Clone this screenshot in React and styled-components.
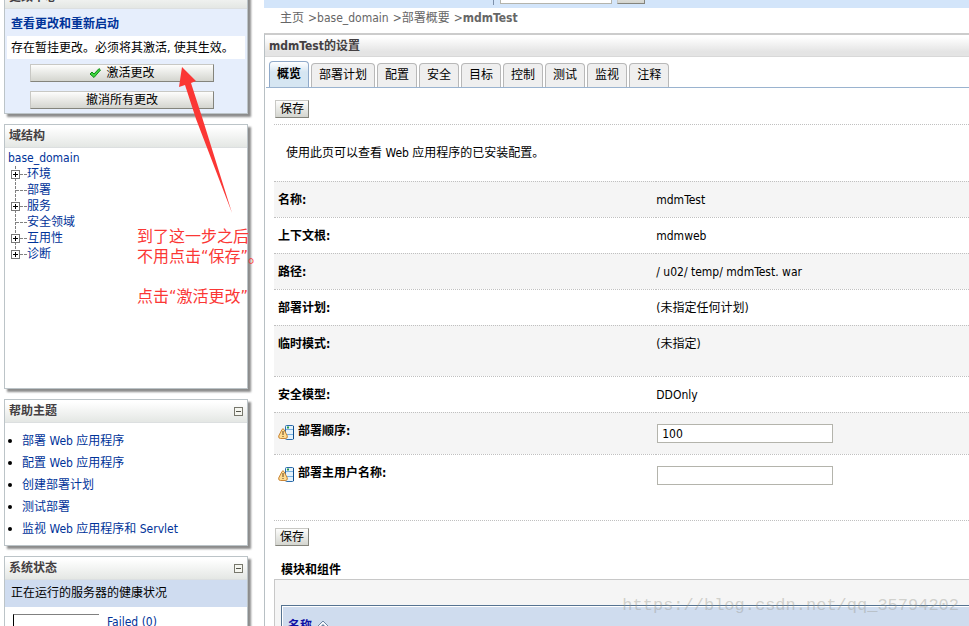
import styled, { createGlobalStyle, css } from "styled-components";

const GlobalStyle = createGlobalStyle`
  * {
    box-sizing: border-box;
  }
  html, body {
    margin: 0;
    height: 100%;
    overflow: hidden;
    background: #fff;
  }
  body, button, input {
    font-family: "DejaVu Sans Condensed", "Noto Sans CJK SC", sans-serif;
    font-size: 12px;
    line-height: 16px;
    color: #000;
  }
  a {
    color: #039;
    text-decoration: none;
  }
`;

// the console is scrolled down a little, so the first header is cut off
const Console = styled.div`
  display: flex;
  margin-top: -15px;
`;

/* ---------- left column ---------- */

const Sidebar = styled.aside`
  width: 264px;
  flex-shrink: 0;
  display: flex;
  flex-direction: column;
  gap: 10px;
  padding: 0 16px 0 4px;
`;

const Portlet = styled.section`
  border: 1px solid #bcc4c8;
  background: ${(p) => (p.$tinted ? "#e6eefc" : "#fff")};
  box-shadow: 3px 3px 2px #8c8c8c;
`;

const PortletHeader = styled.header`
  display: flex;
  justify-content: space-between;
  align-items: center;
  height: 23px;
  padding: 0 4px;
  border-bottom: 1px solid #dcdfe0;
  background: linear-gradient(#fff 10%, #e4e7e4);
`;

const PortletTitle = styled.h2`
  margin: 0;
  font-size: 12px;
  line-height: 16px;
  color: #443f42;
`;

const CollapseButton = styled.button`
  display: flex;
  width: 9px;
  height: 9px;
  padding: 0;
  border: 0;
  background: none;
`;

const ChangeBody = styled.div`
  padding: 7px 2px 4px;
`;

const ChangeLink = styled.a`
  display: block;
  padding-left: 4px;
  font-weight: bold;
`;

const ChangeNote = styled.p`
  margin: 4px 0 5px;
  padding: 4px 4px 3px;
  background: #fff;
  white-space: nowrap;
`;

const Button = styled.button`
  display: flex;
  align-items: center;
  justify-content: center;
  gap: 5px;
  height: 18px;
  padding: 0 4px;
  border: 1px solid;
  border-color: #c8c8c4 #84847c #84847c #c8c8c4;
  background: linear-gradient(#fdfdfc, #d4d5cf);
  white-space: nowrap;
`;

const WideButton = styled(Button)`
  width: 184px;
  margin-left: 23px;
  & + & {
    margin-top: 9px;
  }
`;

const TreeBody = styled.div`
  height: 240px;
  padding: 2px 3px;
`;

const Tree = styled.ul`
  margin: 0;
  padding: 0;
  list-style: none;
`;

const TreeItem = styled.li`
  display: flex;
  align-items: center;
  height: 16px;
  padding-left: 3px;
`;

const HelpList = styled.ul`
  margin: 0;
  padding: 7px 0 5px 17px;
  list-style: none;
  li {
    line-height: 22px;
    display: flex;
    align-items: center;
    white-space: nowrap;
  }
  li::before {
    content: "";
    width: 4px;
    height: 4px;
    margin: 0 10px 0 -14px;
    border-radius: 2px;
    background: #000;
  }
`;

const StatusTitle = styled.div`
  padding: 5px 6px 6px;
  background: #cfdcf0;
`;

const StatusRow = styled.div`
  display: flex;
  gap: 8px;
  padding: 7px 8px;
`;

const StatusBar = styled.div`
  width: 86px;
  height: 18px;
  border-top: 1px solid #808080;
  border-left: 1px solid #000;
`;

/* ---------- main column ---------- */

const Main = styled.main`
  flex: 1;
  min-width: 0;
`;

const TopBar = styled.form`
  display: flex;
  gap: 5px;
  height: 23px;
  padding-left: 229px;
  background: #d3e5fa;
`;

const SearchBox = styled.div`
  height: 20px;
  padding-left: 6px;
  border-left: 1px solid #7d90aa;
`;

const TextInput = styled.input`
  width: ${(p) => p.$width}px;
  height: 19px;
  padding: 0 4px;
  border: 1px solid #b4b4ac;
  background: #fff;
`;

const SearchButton = styled(Button)`
  width: 28px;
  height: 19px;
`;

const Breadcrumb = styled.nav`
  display: flex;
  gap: 4px;
  height: 25px;
  padding: 2px 16px;
  color: #666;
  a {
    color: #666;
  }
`;

const Panel = styled.section`
  border-top: 2px solid #ccc;
  border-left: 1px solid #b8c0c4;
`;

const PanelHeader = styled.h1`
  margin: 0;
  height: 22px;
  padding: 3px 4px;
  border-bottom: 1px solid #d8d8d8;
  background: linear-gradient(#fff 10%, #e4e4e4 80%);
  font-size: 12px;
  line-height: 16px;
  color: #443f42;
`;

const Tabs = styled.div`
  display: flex;
  align-items: flex-end;
  gap: 2px;
  height: 31px;
  margin-left: 1px;
  padding-left: 3px;
  border-bottom: 1px solid #9ab3cf;
`;

const Tab = styled.button`
  height: 24px;
  padding: 0 7px 2px;
  border: 1px solid #b8b8b8;
  border-bottom: 0;
  border-radius: 4px 4px 0 0;
  background: #efefef;
  white-space: nowrap;
  ${(p) =>
    p.$active &&
    css`
      height: 26px;
      border-color: #8fa9c9;
      background: linear-gradient(#fff, #d6e6f2 40%);
      font-weight: bold;
    `}
`;

const SaveRow = styled.div`
  padding: ${(p) => (p.$last ? 7 : 12)}px 10px 6px;
`;

const Intro = styled.p`
  margin: 0 0 0 9px;
  padding: 20px 12px;
  border-top: 1px dotted #c0c0c0;
`;

const Config = styled.div`
  padding-left: 9px;
`;

const ConfigTable = styled.table`
  width: 100%;
  border-spacing: 0;
  table-layout: fixed;
  border-bottom: 1px dotted #c0c0c0;
  th, td {
    padding: 10px 0 0 4px;
    border-top: 1px dotted #c0c0c0;
    vertical-align: top;
    text-align: left;
  }
  th {
    width: 55%;
  }
  td {
    padding-left: 0;
  }
  tr:nth-child(odd) {
    background: #f5f5f5;
  }
`;

const ConfigRow = styled.tr`
  height: ${(p) => p.$height}px;
`;

const FieldLabel = styled.label`
  display: flex;
  gap: 4px;
  svg {
    margin-top: 2px;
  }
`;

const FieldInput = styled(TextInput)`
  display: block;
  margin: 1px;
`;

const ModulesTitle = styled.h2`
  margin: 10px 16px 1px;
  font-size: 12px;
  line-height: 16px;
`;

const ModulesBox = styled.div`
  margin-left: 9px;
  padding: 25px 0 0 6px;
  border-top: 1px solid #c8c8c8;
  border-left: 1px solid #c8c8c8;
  background: #f5f5f5;
`;

const ModulesTable = styled.table`
  width: 100%;
  border-spacing: 0;
  border: 1px solid #557391;
  border-right: 0;
  th {
    padding: 11px 5px;
    border: 1px solid #fff;
    border-right: 0;
    background: #cfdcee;
    text-align: left;
  }
  a {
    display: flex;
    gap: 5px;
    align-items: center;
    color: #1010a4;
  }
`;

/* ---------- notes drawn over the page ---------- */

const Note = styled.div`
  position: absolute;
  left: 137px;
  top: 227px;
  font-size: 16px;
  line-height: 20px;
  color: #fb3735;
  white-space: pre;
  pointer-events: none;
`;

const Arrow = styled.svg`
  position: absolute;
  left: 176px;
  top: 64px;
  pointer-events: none;
`;

const Watermark = styled.div`
  position: absolute;
  right: 10px;
  bottom: 8px;
  font-family: "Liberation Mono", monospace;
  font-size: 17px;
  line-height: 24px;
  color: rgba(150, 150, 140, 0.4);
  pointer-events: none;
`;

const CollapseIcon = () => (
  <svg width="9" height="9" shapeRendering="crispEdges">
    <rect x="0.5" y="0.5" width="8" height="8" fill="#f5f6f0" stroke="#77776c" />
    <path d="M2 4.5h5" stroke="#55554c" />
  </svg>
);

const CheckIcon = () => (
  <svg width="12" height="11">
    <path d="M1 6l2-2 2 2 5-5.4 1.500 1.400L5 9.500z" fill="#3fd63f" stroke="#118a18" strokeLinejoin="round" />
  </svg>
);

const TreeIcon = ({ expandable, last }) => (
  <svg width="16" height="16" shapeRendering="crispEdges">
    <path d={last ? "M4.5 0v8" : "M4.5 0v16"} stroke="#808080" strokeDasharray="3 1" />
    <path d="M5 8.5h11" stroke="#808080" strokeDasharray="3 1" />
    {expandable && (
      <>
        <rect x="0.5" y="4.5" width="8" height="8" fill="#fff" stroke="#777" />
        <path d="M2 8.5h5M4.500 6v5" stroke="#000" />
      </>
    )}
  </svg>
);

// server page with a small warning sign: a restart is needed
const RestartIcon = () => (
  <svg width="16" height="16">
    <rect x="7.5" y="0.5" width="8" height="14" rx="1" fill="#e4f2fc" stroke="#2c6cac" />
    <path d="M8 4.5h7M8 9.500h7" stroke="#7ab0e0" />
    <path d="M9 2.5h2" stroke="#2c9c4c" strokeWidth="2" />
    <path d="M15.5 1v13" stroke="#0c4c8c" />
    <path
      d="M4 4.500q1-1.500 2 0l3.300 6.500q.4 2.500-1.800 2.500h-5q-2.200 0-1.800-2.500z"
      fill="#ffdc90"
      stroke="#c88434"
    />
    <path d="M5 6v4M5 11v1" stroke="#604020" />
  </svg>
);

const SortIcon = () => (
  <svg width="12" height="12">
    <path d="M6 1l5 5-5 5-5-5z" fill="#f4f8fc" stroke="#6c86a4" />
    <path d="M3.5 6.500L6 4l2.500 2.500z" fill="#6c86a4" />
  </svg>
);

const treeItems = [
  { name: "环境", expandable: true },
  { name: "部署" },
  { name: "服务", expandable: true },
  { name: "安全领域" },
  { name: "互用性", expandable: true },
  { name: "诊断", expandable: true },
];

const helpItems = [
  "部署 Web 应用程序",
  "配置 Web 应用程序",
  "创建部署计划",
  "测试部署",
  "监视 Web 应用程序和 Servlet",
];

const tabs = ["概览", "部署计划", "配置", "安全", "目标", "控制", "测试", "监视", "注释"];

const config = [
  { label: "名称:", value: "mdmTest", height: 36 },
  { label: "上下文根:", value: "mdmweb", height: 36 },
  { label: "路径:", value: "/ u02/ temp/ mdmTest. war", height: 36 },
  { label: "部署计划:", value: "(未指定任何计划)", height: 36 },
  { label: "临时模式:", value: "(未指定)", height: 51 },
  { label: "安全模型:", value: "DDOnly", height: 36 },
  { label: "部署顺序:", field: "order", value: "100", height: 42 },
  { label: "部署主用户名称:", field: "principal", value: "", height: 66 },
];

function SidePortlet({ title, collapsible, tinted, children }) {
  return (
    <Portlet $tinted={tinted}>
      <PortletHeader>
        <PortletTitle>{title}</PortletTitle>
        {collapsible && (
          <CollapseButton type="button" aria-label={"折叠" + title}>
            <CollapseIcon />
          </CollapseButton>
        )}
      </PortletHeader>
      {children}
    </Portlet>
  );
}

function App() {
  return (
    <>
      <GlobalStyle />
      <Console>
        <Sidebar>
          <SidePortlet title="更改中心" tinted>
            <ChangeBody>
              <ChangeLink href="#changes">查看更改和重新启动</ChangeLink>
              <ChangeNote>存在暂挂更改。必须将其激活, 使其生效。</ChangeNote>
              <WideButton type="button">
                <CheckIcon />
                激活更改
              </WideButton>
              <WideButton type="button">撤消所有更改</WideButton>
            </ChangeBody>
          </SidePortlet>

          <SidePortlet title="域结构">
            <TreeBody>
              <a href="#domain">base_domain</a>
              <Tree>
                {treeItems.map((item, i) => (
                  <TreeItem key={item.name}>
                    <TreeIcon expandable={item.expandable} last={i === treeItems.length - 1} />
                    <a href="#tree">{item.name}</a>
                  </TreeItem>
                ))}
              </Tree>
            </TreeBody>
          </SidePortlet>

          <SidePortlet title="帮助主题" collapsible>
            <HelpList>
              {helpItems.map((item) => (
                <li key={item}>
                  <a href="#help">{item}</a>
                </li>
              ))}
            </HelpList>
          </SidePortlet>

          <SidePortlet title="系统状态" collapsible>
            <StatusTitle>正在运行的服务器的健康状况</StatusTitle>
            <StatusRow>
              <StatusBar />
              <a href="#failed">Failed (0)</a>
            </StatusRow>
          </SidePortlet>
        </Sidebar>

        <Main>
          <TopBar>
            <SearchBox>
              <TextInput $width={112} aria-label="搜索" />
            </SearchBox>
            <SearchButton type="button" aria-label="开始搜索" />
          </TopBar>
          <Breadcrumb>
            <a href="#home">主页</a>
            <span>
              &gt;<a href="#domain">base_domain</a>
            </span>
            <span>
              &gt;<a href="#deployments">部署概要</a>
            </span>
            <span>
              &gt;<b>mdmTest</b>
            </span>
          </Breadcrumb>

          <Panel>
            <PanelHeader>mdmTest的设置</PanelHeader>
            <Tabs role="tablist">
              {tabs.map((tab, i) => (
                <Tab key={tab} type="button" role="tab" aria-selected={i === 0} $active={i === 0}>
                  {tab}
                </Tab>
              ))}
            </Tabs>
            <SaveRow>
              <Button type="button">保存</Button>
            </SaveRow>
            <Intro>使用此页可以查看 Web 应用程序的已安装配置。</Intro>

            <Config>
              <ConfigTable>
                <tbody>
                  {config.map((row) => (
                    <ConfigRow key={row.label} $height={row.height}>
                      <th scope="row">
                        {row.field ? (
                          <FieldLabel htmlFor={row.field}>
                            <RestartIcon />
                            {row.label}
                          </FieldLabel>
                        ) : (
                          row.label
                        )}
                      </th>
                      <td>
                        {row.field ? (
                          <FieldInput id={row.field} $width={176} defaultValue={row.value} />
                        ) : (
                          row.value
                        )}
                      </td>
                    </ConfigRow>
                  ))}
                </tbody>
              </ConfigTable>
            </Config>

            <SaveRow $last>
              <Button type="button">保存</Button>
            </SaveRow>
            <ModulesTitle>模块和组件</ModulesTitle>
            <ModulesBox>
              <ModulesTable>
                <thead>
                  <tr>
                    <th scope="col">
                      <a href="#sort">
                        名称
                        <SortIcon />
                      </a>
                    </th>
                  </tr>
                </thead>
              </ModulesTable>
            </ModulesBox>
          </Panel>
        </Main>
      </Console>

      <Arrow width="60" height="152">
        <path d="M6 3L3 23l6-2 11 34 36 94L26 53 15 19l5-2z" fill="#fb3735" />
      </Arrow>
      <Note>{"到了这一步之后\n不用点击“保存”。\n\n点击“激活更改”"}</Note>
      <Watermark>https://blog.csdn.net/qq_35794202</Watermark>
    </>
  );
}

export default App;
